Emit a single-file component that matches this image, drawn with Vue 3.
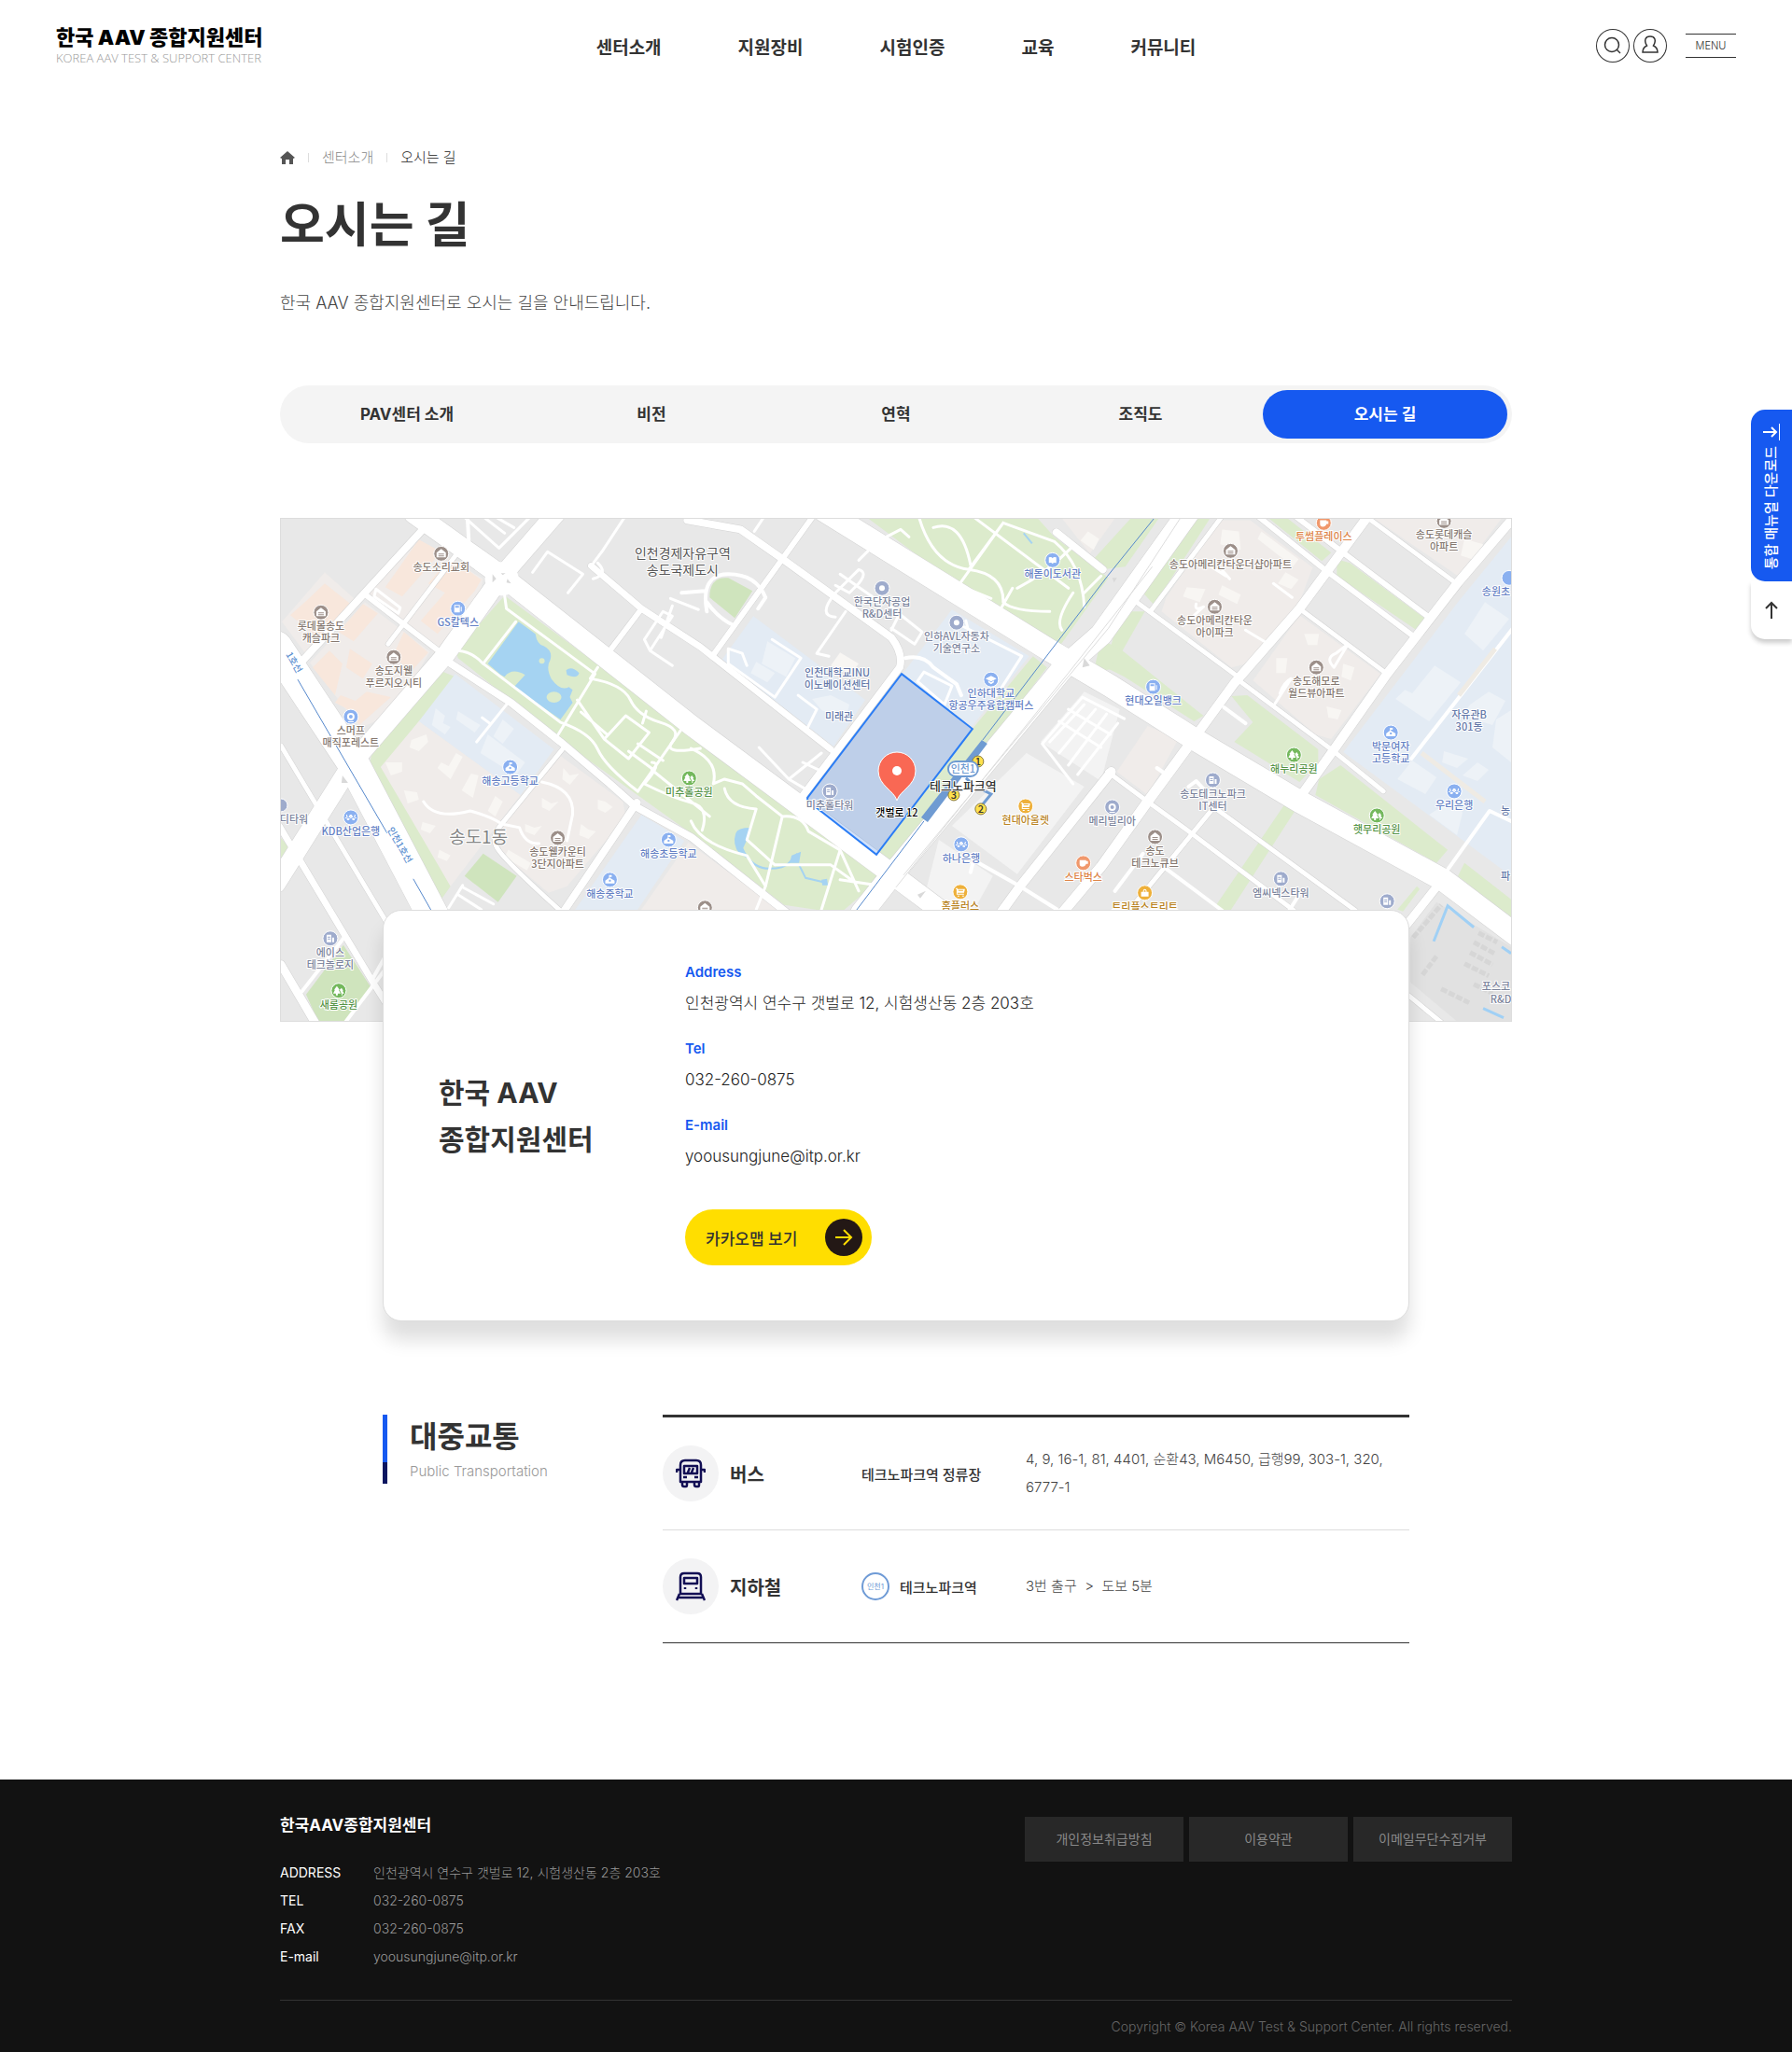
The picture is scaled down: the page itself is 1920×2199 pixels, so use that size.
<script setup>
const menus = ['센터소개', '지원장비', '시험인증', '교육', '커뮤니티']
const tabs = ['PAV센터 소개', '비전', '연혁', '조직도', '오시는 길']
const contacts = [
  { label: 'Address', value: '인천광역시 연수구 갯벌로 12, 시험생산동 2층 203호' },
  { label: 'Tel', value: '032-260-0875' },
  { label: 'E-mail', value: 'yoousungjune@itp.or.kr' },
]
const footerInfo = [
  { label: 'ADDRESS', value: '인천광역시 연수구 갯벌로 12, 시험생산동 2층 203호' },
  { label: 'TEL', value: '032-260-0875' },
  { label: 'FAX', value: '032-260-0875' },
  { label: 'E-mail', value: 'yoousungjune@itp.or.kr' },
]
const policies = ['개인정보취급방침', '이용약관', '이메일무단수집거부']

// Map areas: [fill class, polygon points]
const areas = [
  ['beige', '47,58 83,90 27,146 1,111'],
  ['beige', '143,20 217,65 213,83 167,146 93,83'],
  ['beige', '90,90 160,143 120,210 85,225 31,155'],
  ['peach', '47,70 76,93 56,112 40,128 10,104 28,88'],
  ['peach', '148,23 172,36 130,84 112,74'],
  ['peach', '182,42 215,66 208,78 168,124 150,110 176,80 158,70'],
  ['peach', '88,92 104,102 78,132 62,122'],
  ['peach', '52,142 66,156 58,190 34,160'],
  ['peach', '74,140 98,156 88,172 70,160'],
  ['peach', '132,122 158,144 140,164 120,148'],
  ['peach', '92,186 118,192 84,222 70,204 58,198 64,190 80,196'],
  ['green', '240,83 450,238 647,384 600,424 540,415 440,338 300,238 190,150 188,142'],
  ['green', '170,163 187,170 110,265 182,395 172,409 93,276 97,255'],
  ['blue', '187,167 293,248 257,297 148,218'],
  ['beige', '148,218 257,297 233,328 182,395 107,267'],
  ['beige', '300,255 367,304 370,321 307,395 287,402 237,360 233,335'],
  ['field', '217,360 253,384 233,412 197,384'],
  ['blue', '387,318 433,346 380,424 313,424'],
  ['beige', '437,348 540,424 384,424'],
  ['field', '67,458 97,504 70,540 40,540 27,511'],
  ['green', '0,343 12,357 0,373'],
  ['blue', '720,98 803,148 740,225 667,167 680,150'],
  ['blue', '507,105 627,195 593,245 473,152'],
  ['green', '630,0 817,140 835,138 888,64 830,20 812,0'],
  ['beige', '838,0 895,0 868,38'],
  ['green', '882,55 906,52 942,0 912,0 872,44'],
  ['green', '807,148 822,160 760,242 660,375 640,361 742,226'],
  ['light', '800,252 862,288 790,382 720,330'],
  ['light', '706,345 764,384 744,420 690,408'],
  ['light', '862,186 900,205 880,282 815,240'],
  ['green', '975,0 997,0 937,93 925,80'],
  ['green', '1060,0 1080,0 1127,37 1117,46'],
  ['green', '1133,44 1147,48 1227,107 1220,121 1133,62'],
  ['beige', '1007,2 1040,2 1107,53 1093,90 1040,155 1020,160 945,100 950,85'],
  ['beige', '1093,104 1180,167 1127,237 1110,232 1043,174'],
  ['beige', '1173,0 1310,0 1263,62'],
  ['beige', '930,223 963,237 930,297 897,272'],
  ['blue', '1320,20 1263,90 1140,251 1273,349 1320,384'],
  ['green', '1020,191 1037,190 1113,248 1113,262 1093,283 1023,240 1043,219'],
  ['green', '1137,265 1252,356 1240,370 1110,297 1114,280'],
  ['green', '900,100 927,100 903,142 990,212 980,218 905,170 885,160'],
  ['green', '1270,370 1320,409 1320,430 1263,384'],
  ['green', '1077,307 1090,311 1017,424 1003,416'],
  ['green', '1219,395 1222,398 1204,422 1198,420'],
  ['green', '872,165 880,130 900,140 890,162'],
  ['dark', '1240,412 1320,460 1320,540 1262,540 1212,498 1212,450'],
  // buildings
  ['white', '166,204 176,212 174,220 182,224 176,232 162,222'],
  ['white', '190,207 214,222 208,230 188,216'],
  ['white', '238,216 250,226 238,242 228,234'],
  ['white', '222,232 262,262 252,276 214,252'],
  ['build', '140,238 156,232 158,240 148,250 138,246'],
  ['build', '112,262 130,262 130,272 118,276'],
  ['build', '188,252 195,256 182,280 168,268 172,262 180,266'],
  ['build', '204,274 212,276 206,300 194,292'],
  ['build', '230,298 238,304 230,320 222,314'],
  ['build', '132,292 146,294 148,302 136,306'],
  ['build', '152,326 166,330 160,338 150,334'],
  ['build', '170,356 182,362 178,368 168,364'],
  ['build', '303,268 310,276 320,274 310,286 302,280'],
  ['build', '280,300 290,306 298,304 288,314 280,310'],
  ['build', '340,302 348,304 356,310 348,316 340,312'],
  ['build', '322,328 330,334 338,336 330,344 320,340'],
  ['build', '262,328 272,332 280,330 272,340 262,336'],
  ['build', '244,356 268,370 264,378 240,364'],
  ['white', '522,132 552,150 542,170 516,156'],
  ['white', '510,154 530,166 522,176 504,166'],
  ['white', '590,190 610,200 606,216 580,206 570,194'],
  ['build', '600,144 620,156 612,166 590,158'],
  ['build', '866,14 878,22 872,34 858,24'],
  ['build', '1052,14 1092,44 1086,52 1048,22'],
  ['build', '1010,12 1028,14 1030,34 1008,28'],
  ['build', '1078,58 1092,66 1084,76 1070,70'],
  ['build', '972,74 992,76 986,90 968,84'],
  ['build', '1010,72 1030,82 1026,92 1006,82'],
  ['build', '1098,124 1114,124 1112,136 1102,136'],
  ['build', '1068,150 1080,150 1078,166 1068,166'],
  ['build', '1140,156 1152,160 1148,174 1138,170'],
  ['build', '1122,202 1138,206 1134,216 1124,214'],
  ['build', '1270,22 1290,28 1284,46 1266,40'],
  ['white', '1292,90 1318,108 1290,142 1270,124'],
  ['white', '1238,158 1266,176 1232,218 1196,194 1206,184 1214,188'],
  ['white', '1296,186 1314,196 1300,222 1268,212 1276,200'],
  ['white', '1248,250 1274,258 1262,268 1246,262'],
  ['white', '1284,262 1296,270 1284,282 1268,276'],
  ['white', '1214,260 1240,278 1228,296 1198,280'],
  ['white', '1260,300 1268,316 1262,340 1232,318'],
  ['white', '1304,216 1320,206 1320,262 1300,246'],
]

// Roads: [stroke width, path]
const roads = [
  [22, 'M143 -5 237 62 440 222 653 380 720 430'],
  [20, 'M295 -5 237 62 177 146 77 262 -5 392'],
  [34, 'M-5 138 77 262 165 430'],
  [8, 'M155 9 23 153'],
  [5, 'M192 34 115 135'],
  [6, 'M92 83 170 143'],
  [3, 'M102 76 128 96 126 102 100 84Z'],
  [4, 'M200 -4 202 32'],
  [3, 'M196 -2 234 32 270 -4 M214 -4 240 16 M226 -4 250 10'],
  [3, 'M270 58 286 36 324 60 308 80'],
  [8, 'M173 150 247 198 300 240 353 285 380 309 440 342 507 395 545 425'],
  [3, 'M252 111 217 156'],
  [3, 'M240 83 242 97 337 167 297 233'],
  [3, 'M190 142Q205 143 217 156L300 219Q332 230 340 248T383 293'],
  [3, 'M332 172Q367 178 375 195T407 219 420 240 450 247'],
  [3, 'M370 212 395 230 373 258 347 237Z M318 195 347 237 M340 160 332 172 M322 208 350 232 M388 220 392 207 M383 242 410 260 M373 250 400 270'],
  [3, 'M430 226 383 293 M390 285Q420 300 440 305T452 335 M398 270 460 320 M398 262 Q410 262 390 285'],
  [3, 'M440 247Q470 260 464 285 M464 285 476 280 495 285 510 298 538 320Q560 318 566 336L600 356 620 400 M476 290Q480 310 510 312L500 345 530 372 M538 320 520 395 M440 325Q450 350 500 362L520 395 510 420 M530 372 590 372 612 388 M600 356 580 420 M600 388 640 394'],
  [5, 'M302 248 237 328Q226 340 231 352T303 424'],
  [8, 'M382 305 302 424'],
  [3, 'M153 304Q165 324 203 314 225 320 237 328L256 332Q262 350 277 349'],
  [3, 'M280 283Q315 290 313 318L307 346'],
  [3, 'M242 200 210 240 M216 214 224 220'],
  [5, 'M0 244 40 311 113 433'],
  [7, 'M-2 330 100 500 125 540'],
  [9, 'M0 479 37 542'],
  [4, 'M20 511 67 451 M66 545 115 480 M98 495 112 470'],
  [3, 'M195 396 228 414 M190 404 215 420 M195 394 180 418'],
  [3, 'M370 -3 345 35 333 51'],
  [7, 'M333 51 387 97 450 138 590 248'],
  [6, 'M387 97 350 146'],
  [8, 'M436 2 493 12 540 45 655 128Q668 145 664 160L557 302'],
  [6, 'M573 -5 463 148'],
  [3, 'M508 14 520 -4 M340 48Q352 60 335 65'],
  [4, 'M457 100Q450 60 480 60T520 85L512 97 M457 90Q470 108 486 115 M430 80 455 78'],
  [3, 'M418 86 448 98 M420 94 408 128 M390 130 410 100 420 105 396 142Z M396 142 420 158'],
  [3, 'M595 80 620 55Q630 58 620 70L610 80 595 72 M595 80Q575 105 595 106 M606 100 575 145 588 148'],
  [3, 'M654 95 688 122 680 135 655 118 M665 100 655 120 M640 88 600 60'],
  [4, 'M670 150Q690 146 700 160L725 178 730 190'],
  [3, 'M730 115 795 148 768 190 M740 130 735 110 M683 175 690 165 720 180 712 200Z'],
  [3, 'M527 130 558 150 530 192 480 156 480 140 495 145 500 158'],
  [3, 'M555 190 575 205 565 225 M513 246 545 280 562 290 M545 280 580 252 M560 262 577 270'],
  [3, 'M640 25 665 12 674 20 M640 25 620 45'],
  [3, 'M685 0Q700 50 738 55T775 90Q785 100 825 100 M700 10Q730 0 740 50 M738 55 775 5 M725 75 775 5 M745 0 845 75 M775 5 830 25Q860 50 862 95 M790 75Q820 60 850 30 M735 75 762 86 M850 80Q830 110 838 120 M785 75 768 105 M862 80 880 62'],
  [24, 'M583 -8 827 143 890 180 980 237 1093 304 1247 388 1325 447'],
  [24, 'M975 -8 880 125 840 160 653 386 623 424'],
  [8, 'M832 15 882 55'],
  [10, 'M891 272 793 395 772 424'],
  [11, 'M977 240 930 304 880 374 838 424'],
  [5, 'M887 272 930 304 973 335 1087 421'],
  [5, 'M997 307 1153 421'],
  [5, 'M1003 308 910 421'],
  [4, 'M947 374 1010 421 M925 360 895 400 M1092 405 1080 424'],
  [4, 'M745 368 793 395 833 420 M660 384 700 420 M740 380 745 360'],
  [3, 'M817 242 860 192 905 215 M817 242 850 285 M862 200 825 240 M874 205 835 252 M886 210 845 265 M898 220 855 275 M845 205 890 232 M835 218 880 246'],
  [10, 'M1167 -3 1093 97 1023 177 977 240'],
  [10, 'M1322 0 1263 69 1187 167 1130 248 1093 300'],
  [6, 'M1045 -5 1120 55 1217 128'],
  [6, 'M1085 -5 1140 37 1233 107'],
  [5, 'M1167 0 1260 69'],
  [5, 'M1093 97 1187 167'],
  [5, 'M1028 174 1127 248 1183 293'],
  [5, 'M910 84 1027 170'],
  [5, 'M1012 -5 933 100'],
  [3, 'M968 115 990 95Q980 100 982 92 M1018 65Q1005 50 1014 62L995 50 M1085 85 1065 70 M1035 120 1055 132 M1066 200 1084 172Q1076 176 1072 188 M1145 135 1130 160Q1120 150 1132 145Z'],
  [4, 'M1012 203 1035 220'],
  [4, 'M1322 118 1213 258'],
  [4, 'M1320 325 1297 314 1247 384'],
  [9, 'M1243 392 1205 440'],
  [5, 'M1205 508 1250 545'],
  [4, 'M940 268 950 275 M974 288 982 282 995 296'],
]

// Points of interest: [x, y, kind, icon, label lines]
const pois = [
  [172, 38, 'apt', 'house', ['송도소리교회']],
  [43, 101, 'apt', 'house', ['롯데몰송도', '캐슬파크']],
  [190, 97, 'public', 'fuel', ['GS칼텍스']],
  [121, 149, 'apt', 'house', ['송도지웰', '푸르지오시티']],
  [75, 213, 'play', 'ring', ['스머프', '매직포레스트']],
  [246, 267, 'public', 'school', ['해송고등학교']],
  [438, 279, 'park', 'tree', ['미추홀공원']],
  [75, 321, 'public', 'won', ['KDB산업은행']],
  [297, 343, 'apt', 'house', ['송도웰카운티', '3단지아파트']],
  [416, 345, 'public', 'school', ['해송초등학교']],
  [353, 388, 'public', 'school', ['해송중학교']],
  [53, 451, 'office', 'tower', ['에이스', '테크놀로지']],
  [62, 507, 'park', 'tree', ['새롬공원']],
  [455, 418, 'apt', 'house', []],
  [828, 45, 'public', 'book', ['해돋이도서관']],
  [645, 75, 'office', 'dot', ['한국단자공업', 'R&D센터']],
  [725, 112, 'office', 'dot', ['인하AVL자동차', '기술연구소']],
  [762, 173, 'public', 'cap', ['인하대학교', '항공우주융합캠퍼스']],
  [589, 293, 'office', 'tower', ['미추홀타워']],
  [799, 309, 'shop', 'cart', ['현대아울렛']],
  [730, 350, 'public', 'won', ['하나은행']],
  [729, 401, 'shop', 'cart', ['홈플러스']],
  [892, 310, 'office', 'ring', ['메리빌리아']],
  [861, 370, 'cafe', 'cup', ['스타벅스']],
  [1119, 5, 'cafe', 'cup', ['투썸플레이스']],
  [1248, 3, 'apt', 'house', ['송도롯데캐슬', '아파트']],
  [1019, 35, 'apt', 'house', ['송도아메리칸타운더샵아파트']],
  [1002, 95, 'apt', 'house', ['송도아메리칸타운', '아이파크']],
  [1111, 160, 'apt', 'house', ['송도해모로', '월드뷰아파트']],
  [936, 181, 'public', 'fuel', ['현대오일뱅크']],
  [1191, 230, 'public', 'school', ['박문여자', '고등학교']],
  [1087, 254, 'park', 'tree', ['해누리공원']],
  [1259, 293, 'public', 'won', ['우리은행']],
  [1176, 319, 'park', 'tree', ['햇무리공원']],
  [1000, 281, 'office', 'tower', ['송도테크노파크', 'IT센터']],
  [938, 342, 'apt', 'house', ['송도', '테크노큐브']],
  [927, 402, 'shop', 'bag', ['트리플스트리트']],
  [1073, 387, 'office', 'tower', ['엠씨넥스타워']],
  [1187, 411, 'office', 'tower', []],
]
const glyphs = {
  house: 'M0 -5 5 -1V4H-5V-1Z M-3 0H3V1H-3Z M-3 2H3V3H-3Z',
  school: 'M-1 -5H2V-3H0V-2L5 1V4H-5V1L-1 -2Z M-1 0V2H1V0Z',
  tree: 'M-2 -5 1 -1H0L2 3H-1V5H-3V3H-6L-4 -1H-5Z M3 -3 5 0H4L6 3H4V5H3V3L1 -1Z',
  tower: 'M-4 -4H1V4H-4Z M2 -1H4V4H2Z M-3 -2V-1H0V-2Z M-3 0V1H0V0Z',
  cart: 'M-5 -4H-3V-3H5L4 1H-3V2H4V3H-4V-3H-5Z M-3 4H-1V5H-3Z M2 4H4V5H2Z M-2 -2V-1H3V-2Z',
  bag: 'M-4 -1H-2Q-2 -4 0 -4T2 -1H4V4H-4Z M-1 -1H1Q1 -3 0 -3T-1 -1Z',
  cup: 'M-4 -3H3V-2H5V1H3Q2 4 -1 4T-4 1Z',
  fuel: 'M-4 -4H2V4H-4Z M-3 -3V-1H1V-3Z M3 -2H4V3H3Z',
  book: 'M-4 -3Q-1 -4 0 -2 1 -4 4 -3V3Q1 2 0 4 -1 2 -4 3Z',
  cap: 'M0 -4 6 -1 0 2 -6 -1Z M-3 1 0 3 3 1V3L0 5 -3 3Z',
  dot: 'M-3 0A3 3 0 1 0 3 0A3 3 0 1 0 -3 0Z',
  ring: 'M-4 0A4 4 0 1 0 4 0A4 4 0 1 0 -4 0Z M-2 0A2 2 0 1 1 2 0A2 2 0 1 1 -2 0Z M-3 5H3V6H-3Z',
  won: 'M-5 -3H-4L-3 1 -1 -3H1L3 1 4 -3H5L4 3H2L0 -1 -2 3H-4Z M-6 0H6V1H-6Z',
}
const exits = [
  [748, 261, '1'],
  [722, 297, '3'],
  [751, 312, '2'],
]
</script>

<template>
  <div class="page">
    <header class="header">
      <a href="#" class="logo">
        <strong>한국 AAV 종합지원센터</strong>
        <span>KOREA AAV TEST &amp; SUPPORT CENTER</span>
      </a>
      <nav class="gnb" aria-label="주 메뉴">
        <a v-for="m in menus" :key="m" href="#">{{ m }}</a>
      </nav>
      <div class="utils">
        <button type="button" class="round" aria-label="검색">
          <svg viewBox="0 0 36 36" width="36" height="36"><circle cx="17" cy="17" r="7.500" /><path d="M22 22 26 26" /></svg>
        </button>
        <button type="button" class="round" aria-label="로그인">
          <svg viewBox="0 0 36 36" width="36" height="36"><path d="M14.500 18C11 12 13 8 18 8S25 12 21.500 18C26 20 26 23 26 25H10C10 23 10 20 14.500 18Z" /></svg>
        </button>
        <button type="button" class="menu">MENU</button>
      </div>
    </header>

    <main class="main">
      <nav class="crumbs" aria-label="현재 위치">
        <a href="#" aria-label="홈">
          <svg viewBox="0 0 16 14" width="16" height="14"><path d="M8 0 16 7 14 8V14H10V9H6V14H2V8L0 7Z" fill="#555" /></svg>
        </a>
        <i></i>
        <a href="#">센터소개</a>
        <i></i>
        <span>오시는 길</span>
      </nav>
      <h1>오시는 길</h1>
      <p class="lead">한국 AAV 종합지원센터로 오시는 길을 안내드립니다.</p>

      <nav class="tabs" aria-label="센터소개 메뉴">
        <a v-for="(t, i) in tabs" :key="t" href="#" :class="{ on: i === 4 }">{{ t }}</a>
      </nav>

      <div class="map">
        <svg viewBox="0 0 1320 540" preserveAspectRatio="xMidYMid slice" role="img" aria-label="갯벌로 12 주변 지도">
          <polygon v-for="(a, i) in areas" :key="'a' + i" :class="a[0]" :points="a[1]" />
          <path class="lake" d="M255 111 273 124Q275 136 282 137 292 142 289 152 284 160 290 172 300 186 309 181L313 184 310 192 313 198 300 216 250 181 262 168Q248 160 240 170L236 168 222 156Z" />
          <path class="lake" d="M306 163Q312 158 320 166 318 173 307 168Z" />
          <ellipse class="green" cx="293" cy="192" rx="8" ry="6" />
          <circle class="green" cx="280" cy="153" r="3" />
          <path class="lake" d="M488 338Q490 332 504 332L500 345 496 354 502 366 492 360Q484 350 488 338Z" />
          <path class="stream" d="M498 360Q508 376 524 376T545 370L554 360 M556 372 563 386 584 391" />
          <path class="lake" d="M548 362 558 358 556 370 546 370Z M580 388 586 387 587 394 581 394Z" />
          <path class="stream" d="M797 16 806 27" />
          <path class="field" d="M460 85Q460 62 480 64L506 78 487 107Z" />
          <g class="casing">
            <path v-for="(r, i) in roads" :key="'c' + i" :d="r[1]" :stroke-width="r[0] > 4 ? r[0] + 1 : 0" />
          </g>
          <g class="road">
            <path v-for="(r, i) in roads" :key="'r' + i" :d="r[1]" :stroke-width="r[0]" />
          </g>
          <circle cx="237" cy="65" r="18" fill="#fff" />
          <path class="median" d="M227 60 231 65 227 69Z M236 59H241L238 61Z M243 65 247 70 242 69Z M66 276 72 284H65Z M862 150 868 158 860 160Z M892 64H897L894 69Z M683 404 692 400 686 408Z" />
          <path class="divider" d="M965 0 888 118 668 383 M935 52 845 166 660 396" />
          <path class="bridge" d="M1264 190 1303 140 M1224 252 1292 304" />
          <path class="canal" d="M1237 454 1252 416 1280 439 M1310 460 1320 467 M1290 526 1312 536" />
          <path class="estate" d="M1215 450 1245 415 M1225 490 1240 470 M1285 445 1305 455 M1280 455 1302 467 M1276 466 1300 479 M1270 478 1296 491 M1245 505 1275 520 M1280 500 1300 510" />

          <path class="rail" d="M18 173 114 338 M142 387 163 424" />
          <path class="rail" d="M937 0 887 62 753 238 M690 325 615 424" />
          <polygon class="site" points="666,167 742,226 639,361 565,303 565,300" />
          <polygon class="platform" points="752,238 758,242 694,326 687,321" />
          <path class="exitway" d="M735 279 742 285 M754 292 762 296 753 307" />

          <g class="line-name">
            <text transform="translate(5 146) rotate(60)">1호선</text>
            <text transform="translate(114 334) rotate(60)">인천1호선</text>
          </g>

          <g v-for="(p, i) in pois" :key="'p' + i" :class="['poi', p[2]]" :transform="`translate(${p[0]} ${p[1]})`">
            <circle r="8" />
            <path :d="glyphs[p[3]]" fill-rule="evenodd" />
            <text v-for="(line, n) in p[4]" :key="n" :y="19 + n * 13">{{ line }}</text>
          </g>
          <g class="poi office">
            <circle cx="0" cy="308" r="7" />
            <text x="14" y="327">디타워</text>
            <text x="1304" y="506">포스코</text>
            <text x="1309" y="520">R&amp;D</text>
          </g>
          <g class="poi public">
            <circle cx="1318" cy="64" r="8" />
            <text x="1304" y="83">송원초</text>
          </g>
          <g class="poi building">
            <text x="597" y="170">인천대학교INU</text>
            <text x="597" y="183">이노베이션센터</text>
            <text x="599" y="217">미래관</text>
            <text x="1275" y="215">자유관B</text>
            <text x="1275" y="228">301동</text>
            <text x="1314" y="318">농</text>
            <text x="1314" y="388">파</text>
          </g>
          <g class="district">
            <text x="431" y="43">인천경제자유구역</text>
            <text x="431" y="61">송도국제도시</text>
          </g>
          <text class="dong" x="212" y="349">송도1동</text>

          <g v-for="e in exits" :key="e[2]" class="exit">
            <circle :cx="e[0]" :cy="e[1]" r="6" />
            <text :x="e[0]" :y="e[1] + 4">{{ e[2] }}</text>
          </g>
          <g class="station">
            <rect x="716" y="261" width="32" height="16" rx="8" />
            <text class="station-line" x="732" y="273">인천1</text>
            <text class="station-name" x="732" y="292">테크노파크역</text>
          </g>
          <path class="pin" d="M661 303C658 292 641 287 641 271A20 20 0 0 1 681 271C681 287 664 292 661 303Z" />
          <circle cx="661" cy="271" r="5" fill="#fff" />
          <text class="pin-label" x="661" y="320">갯벌로 12</text>
        </svg>
      </div>

      <section class="card">
        <h2>한국 AAV<br />종합지원센터</h2>
        <div class="info">
          <dl>
            <div v-for="c in contacts" :key="c.label">
              <dt>{{ c.label }}</dt>
              <dd>{{ c.value }}</dd>
            </div>
          </dl>
          <a href="#" class="kakao">
            카카오맵 보기
            <svg viewBox="0 0 40 40" width="40" height="40">
              <circle cx="20" cy="20" r="20" fill="#231815" />
              <path d="M11 20H28 M20 12 28 20 20 28" fill="none" stroke="#ffde00" stroke-width="2" />
            </svg>
          </a>
        </div>
      </section>

      <section class="transit">
        <div class="transit-title">
          <h2>대중교통</h2>
          <p>Public Transportation</p>
        </div>
        <table>
          <tbody>
            <tr>
              <th scope="row">
                <div class="mode">
                  <span class="disc">
                    <svg viewBox="0 0 32 32" width="32" height="32">
                      <path d="M5 25V7Q5 2 10 2H22Q27 2 27 7V25Z M9 8H23V16H9Z M13 15 15 10 M17 15 19 10 M5 12H1V15 M27 12H31V15 M8 20H12 M20 20H24 M7 26V28Q7 30 9 30H11Q12 30 12 28V26 M20 26V28Q20 30 22 30H24Q25 30 25 28V26" />
                    </svg>
                  </span>
                  버스
                </div>
              </th>
              <td class="stop">테크노파크역 정류장</td>
              <td class="detail">4, 9, 16-1, 81, 4401, 순환43, M6450, 급행99, 303-1, 320, 6777-1</td>
            </tr>
            <tr>
              <th scope="row">
                <div class="mode">
                  <span class="disc">
                    <svg viewBox="0 0 32 32" width="32" height="32">
                      <path d="M5 24V6Q5 2 9 2H23Q27 2 27 6V24Z M9 7H23V13H9Z M10 17V19 M22 17V19 M4 24 1 31 M28 24 31 31 M3 28H29" />
                    </svg>
                  </span>
                  지하철
                </div>
              </th>
              <td class="stop">
                <div class="subway"><span class="line">인천1</span>테크노파크역</div>
              </td>
              <td class="detail">3번 출구 &nbsp;&gt;&nbsp; 도보 5분</td>
            </tr>
          </tbody>
        </table>
      </section>
    </main>

    <footer class="footer">
      <div class="footer-in">
        <div class="footer-top">
          <div>
            <h2>한국AAV종합지원센터</h2>
            <dl>
              <div v-for="f in footerInfo" :key="f.label">
                <dt>{{ f.label }}</dt>
                <dd>{{ f.value }}</dd>
              </div>
            </dl>
          </div>
          <div class="policies">
            <a v-for="p in policies" :key="p" href="#">{{ p }}</a>
          </div>
        </div>
        <p class="copy">Copyright © Korea AAV Test &amp; Support Center. All rights reserved.</p>
      </div>
    </footer>

    <aside class="quick">
      <a href="#" class="manual">
        <svg viewBox="0 0 20 18" width="20" height="18"><path d="M1 9H15 M10 4 15 9 10 14" /><path d="M18 0H19V18H18Z" class="bar" /></svg>
        <span>통합 매뉴얼 다운로드</span>
      </a>
      <button type="button" class="top" aria-label="맨 위로">
        <svg viewBox="0 0 16 20" width="16" height="20"><path d="M8 19V2 M2 8 8 2 14 8" /></svg>
      </button>
    </aside>
  </div>
</template>

<style>
body {
  margin: 0;
}
</style>

<style scoped>
.page {
  font-family: Inter, 'Noto Sans CJK KR', sans-serif;
  color: #333;
  background: #fff;
}
.page * {
  box-sizing: border-box;
}
a {
  color: inherit;
  text-decoration: none;
}
button {
  padding: 0;
  border: 0;
  background: none;
  font: inherit;
  color: inherit;
}
h1, h2, p, dl, dd {
  margin: 0;
}
svg {
  display: block;
}

.header {
  display: grid;
  grid-template-columns: 1fr auto 1fr;
  align-items: center;
  height: 98px;
  padding: 0 60px;
}
.logo {
  display: flex;
  flex-direction: column;
  color: #000;
}
.logo strong {
  font-size: 22px;
  font-weight: 900;
  line-height: 26px;
}
.logo span {
  font-family: 'Open Sans', sans-serif;
  font-size: 13px;
  font-weight: 300;
  line-height: 18px;
  color: #999;
}
.gnb {
  display: flex;
  gap: 82px;
  font-size: 19px;
  font-weight: 600;
}
.utils {
  display: flex;
  justify-content: flex-end;
  align-items: center;
  gap: 4px;
}
.round {
  width: 36px;
  height: 36px;
  border-radius: 50%;
  box-shadow: inset 0 0 0 1px #333;
}
.round svg {
  fill: none;
  stroke: #333;
  stroke-width: 1.5;
}
.menu {
  width: 54px;
  height: 26px;
  margin-left: 16px;
  border-top: 1px solid #333;
  border-bottom: 1px solid #333;
  font-size: 11px;
  font-weight: 300;
  line-height: 24px;
}

.main {
  width: 1320px;
  max-width: 100%;
  margin: 0 auto;
  padding: 59px 0 146px;
}
.crumbs {
  display: flex;
  align-items: center;
  gap: 14px;
  font-size: 15px;
  font-weight: 300;
  line-height: 24px;
  color: #888;
}
.crumbs i {
  width: 1px;
  height: 10px;
  background: #ddd;
}
.crumbs span {
  color: #222;
}
h1 {
  margin-top: 25px;
  font-size: 52px;
  font-weight: 700;
  line-height: 72px;
}
.lead {
  margin-top: 32px;
  font-size: 18px;
  font-weight: 300;
  line-height: 30px;
  color: #444;
}
.tabs {
  display: flex;
  margin-top: 73px;
  padding: 5px;
  border-radius: 31px;
  background: #f4f4f4;
}
.tabs a {
  flex: 1;
  border-radius: 26px;
  font-size: 17px;
  font-weight: 700;
  line-height: 52px;
  text-align: center;
}
.tabs .on {
  background: #1659f0;
  color: #fff;
}

.map {
  margin-top: 80px;
  border: 1px solid #ddd;
  background: #e8e8e8;
}
.map svg {
  width: 100%;
  height: 538px;
}
.beige { fill: #f0ecea; }
.peach { fill: #f8e7dc; }
.green { fill: #dcebcc; }
.field { fill: #cfe4bd; }
.blue { fill: #e3ebf4; }
.light { fill: #f3f3f3; }
.dark { fill: #e1e1e1; }
.white { fill: #edf2f7; }
.build { fill: #f8f6f3; }
.lake { fill: #a5d3f2; }
.stream {
  fill: none;
  stroke: #a5d3f2;
  stroke-width: 2;
}
.casing, .road {
  fill: none;
  stroke: #d3d3d3;
  stroke-linejoin: round;
  stroke-linecap: round;
}
.road {
  stroke: #fff;
}
.median { fill: #d9d9d9; }
.divider, .bridge, .canal, .estate, .rail, .exitway {
  fill: none;
  stroke: #ddd;
  stroke-width: 1;
}
.bridge {
  stroke: #efebe4;
  stroke-width: 5;
}
.canal {
  stroke: #a0d0f5;
  stroke-width: 3;
}
.estate {
  stroke: #d6d6d6;
  stroke-width: 5;
  stroke-dasharray: 7 2;
}
.rail {
  stroke: #5488cc;
}
.exitway {
  stroke: #6f9bd2;
  stroke-width: 3;
}
.site {
  fill: #3c82f0;
  fill-opacity: 0.24;
  stroke: #2b7df5;
  stroke-width: 2;
}
.platform { fill: #6f9bd2; }
.map text {
  font-family: 'Noto Sans CJK KR', sans-serif;
  font-size: 11px;
  font-weight: 500;
  text-anchor: middle;
  paint-order: stroke;
  stroke: #fff;
  stroke-width: 2px;
  stroke-linejoin: round;
}
.map .line-name text {
  fill: #5b8fd0;
  font-size: 10px;
  text-anchor: start;
}
.poi circle {
  stroke: #fff;
  stroke-width: 1;
}
.poi path { fill: #fff; }
.apt circle { fill: #9c8f89; }
.apt text, .play text { fill: #857870; }
.public circle, .play circle { fill: #8ab0f0; }
.public text { fill: #6480c4; }
.office circle { fill: #9eabcc; }
.office text { fill: #7c849c; }
.park circle { fill: #74b85d; }
.park text { fill: #569447; }
.cafe circle { fill: #f0986c; }
.cafe text { fill: #dd8448; }
.shop circle { fill: #eeb03a; }
.shop text { fill: #b98322; }
.building text { fill: #6478a8; }
.map .district text {
  font-size: 14px;
  font-weight: 400;
  fill: #555;
}
.map .dong {
  font-size: 19px;
  font-weight: 400;
  fill: #858585;
}
.exit circle {
  fill: #ffe14d;
  stroke: #8a7a3a;
}
.map .exit text {
  fill: #333;
  stroke: none;
}
.station rect {
  fill: #fff;
  stroke: #6f9bd2;
  stroke-width: 2;
}
.map .station-line {
  fill: #6f9bd2;
}
.map .station-name {
  font-size: 13px;
  fill: #333;
}
.pin {
  fill: #f96854;
  stroke: #fff;
  stroke-width: 1;
}
.map .pin-label {
  fill: #000;
}

.card {
  position: relative;
  display: flex;
  align-items: center;
  width: 1100px;
  max-width: 100%;
  min-height: 441px;
  margin: -120px auto 0;
  padding: 52px 59px;
  border: 1px solid #ddd;
  border-radius: 20px;
  background: #fff;
  box-shadow: 0 20px 20px rgba(0, 0, 0, 0.13);
}
.card h2 {
  width: 264px;
  font-size: 30px;
  font-weight: 700;
  line-height: 50px;
}
.info {
  padding-bottom: 6px;
}
.card dl {
  display: grid;
  gap: 16px;
}
.card dt {
  font-size: 15px;
  font-weight: 600;
  line-height: 26px;
  color: #1659f0;
}
.card dd {
  font-size: 17px;
  font-weight: 300;
  line-height: 40px;
  color: #222;
}
.kakao {
  display: flex;
  justify-content: space-between;
  align-items: center;
  width: 200px;
  height: 60px;
  margin-top: 37px;
  padding: 0 10px 0 22px;
  border-radius: 30px;
  background: #ffde00;
  font-size: 17px;
  font-weight: 500;
}

.transit {
  display: flex;
  justify-content: space-between;
  align-items: flex-start;
  width: 1100px;
  max-width: 100%;
  margin: 100px auto 0;
}
.transit-title {
  padding-left: 24px;
  border-left: 5px solid;
  border-image: linear-gradient(#1659f0 68%, #0b1660 68%) 1;
}
.transit-title h2 {
  font-size: 32px;
  font-weight: 700;
  line-height: 48px;
}
.transit-title p {
  font-size: 15px;
  font-weight: 300;
  line-height: 26px;
  color: #999;
}
table {
  width: 800px;
  border-collapse: separate;
  border-spacing: 0;
  border-top: 3px solid #333;
  border-bottom: 1px solid #333;
}
tr {
  height: 120px;
}
tr + tr {
  height: 121px;
}
tr + tr > * {
  border-top: 1px solid #ddd;
}
th, td {
  padding: 0;
  text-align: left;
}
th {
  width: 213px;
  font-size: 20px;
  font-weight: 600;
}
.mode {
  display: flex;
  align-items: center;
  gap: 12px;
}
.disc {
  display: grid;
  place-items: center;
  width: 60px;
  height: 60px;
  border-radius: 50%;
  background: #f3f3f4;
}
.disc svg {
  fill: none;
  stroke: #120e54;
  stroke-width: 2.5;
  stroke-linejoin: round;
}
.stop {
  width: 176px;
  font-size: 15px;
  font-weight: 500;
}
.subway {
  display: flex;
  align-items: center;
  gap: 11px;
}
.line {
  width: 30px;
  height: 30px;
  border: 2px solid #6f9bd6;
  border-radius: 50%;
  font-size: 8px;
  font-weight: 400;
  line-height: 26px;
  text-align: center;
  color: #6f9bd6;
}
.detail {
  font-size: 15px;
  font-weight: 300;
  line-height: 30px;
  color: #444;
}

.footer {
  background: #121212;
  color: #fff;
}
.footer-in {
  width: 1320px;
  max-width: 100%;
  margin: 0 auto;
}
.footer-top {
  display: flex;
  justify-content: space-between;
  align-items: flex-start;
  padding: 40px 0 31px;
  border-bottom: 1px solid #333;
}
.footer h2 {
  margin-bottom: 27px;
  font-size: 17px;
  font-weight: 700;
  line-height: 18px;
}
.footer dl div {
  display: flex;
  font-size: 14px;
  line-height: 30px;
}
.footer dt {
  width: 100px;
}
.footer dd {
  font-weight: 300;
  color: #999;
}
.policies {
  display: flex;
  gap: 6px;
}
.policies a {
  width: 170px;
  background: #282828;
  font-size: 14px;
  line-height: 48px;
  text-align: center;
  color: #888;
}
.copy {
  font-size: 14px;
  font-weight: 300;
  line-height: 55px;
  text-align: right;
  color: #666;
}

.quick {
  position: fixed;
  top: 439px;
  right: 0;
  width: 44px;
}
.manual {
  display: flex;
  flex-direction: column;
  align-items: center;
  gap: 6px;
  height: 184px;
  padding-top: 15px;
  border-radius: 15px 0 0 15px;
  background: #1659f0;
  font-size: 15px;
  font-weight: 500;
  line-height: 20px;
  color: #fff;
}
.manual span {
  writing-mode: vertical-rl;
  text-orientation: sideways;
  transform: rotate(180deg);
  white-space: nowrap;
}
.quick svg {
  fill: none;
  stroke: #fff;
  stroke-width: 2;
}
.quick .bar {
  fill: #fff;
  stroke: none;
}
.top {
  display: grid;
  place-items: center;
  width: 44px;
  height: 62px;
  border-radius: 0 0 0 15px;
  background: #fff;
  box-shadow: 0 4px 5px rgba(0, 0, 0, 0.2);
}
.quick .top svg {
  stroke: #333;
}
</style>
